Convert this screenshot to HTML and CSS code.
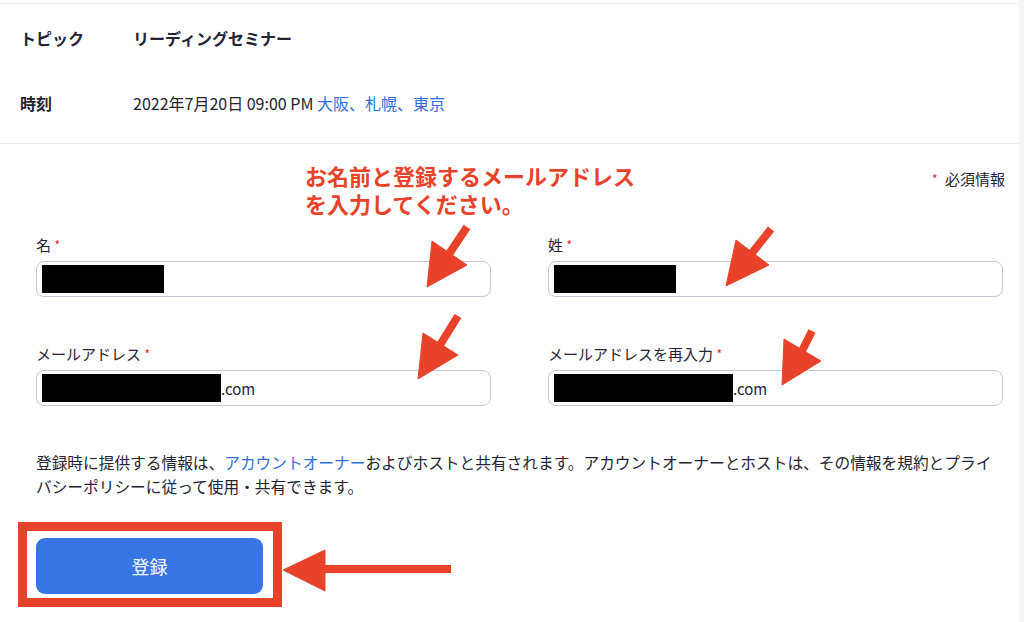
FILE: index.html
```html
<!DOCTYPE html>
<html lang="ja">
<head>
    <meta charset="UTF-8">
    <meta name="viewport" content="width=device-width, initial-scale=1.0">
    <title>ウェビナー登録</title>
    <link rel="stylesheet" href="styles.css">
</head>
<body>
    <div class="page">
        <div class="info">
            <div class="info-row">
                <span class="info-label">トピック</span>
                <span class="info-value bold">リーディングセミナー</span>
            </div>
            <div class="info-row">
                <span class="info-label">時刻</span>
                <span class="info-value">2022年7月20日 09:00 PM <span class="link">大阪、札幌、東京</span></span>
            </div>
        </div>

        <div class="form">
            <div class="required-note"><span class="star">*</span> 必須情報</div>

            <div class="fields">
                <div class="field">
                    <label>名 <span class="star">*</span></label>
                    <div class="input"><span class="redact short"></span></div>
                </div>
                <div class="field">
                    <label>姓 <span class="star">*</span></label>
                    <div class="input"><span class="redact short"></span></div>
                </div>
                <div class="field">
                    <label>メールアドレス <span class="star">*</span></label>
                    <div class="input"><span class="redact long"></span>.com</div>
                </div>
                <div class="field">
                    <label>メールアドレスを再入力 <span class="star">*</span></label>
                    <div class="input"><span class="redact long"></span>.com</div>
                </div>
            </div>

            <p class="notice">登録時に提供する情報は、<span class="link">アカウントオーナー</span>およびホストと共有されます。アカウントオーナーとホストは、その情報を規約とプライバシーポリシーに従って使用・共有できます。</p>

            <button class="submit">登録</button>
        </div>

        <!-- annotation layer -->
        <div class="note-text">お名前と登録するメールアドレス<br>を入力してください。</div>
        <svg class="marks" width="1024" height="622" viewBox="0 0 1024 622">
            <g fill="#e8432a" stroke="#e8432a">
                <line x1="467" y1="227" x2="449" y2="254" stroke-width="8"/>
                <polygon points="427,287 432,241 467,265" stroke-width="1"/>
                <line x1="771" y1="229" x2="752" y2="253" stroke-width="8"/>
                <polygon points="726,286 736,240 769,265" stroke-width="1"/>
                <line x1="458" y1="316" x2="440" y2="345" stroke-width="8"/>
                <polygon points="418,379 423,333 458,355" stroke-width="1"/>
                <line x1="812" y1="331" x2="802" y2="351" stroke-width="8"/>
                <polygon points="782,385 784,339 821,361" stroke-width="1"/>
                <line x1="320" y1="569" x2="451" y2="569" stroke-width="8"/>
                <polygon points="283,570 325,550 325,591" stroke-width="1"/>
                <rect x="22.5" y="526.5" width="255" height="76" fill="none" stroke-width="9"/>
            </g>
        </svg>
    </div>
</body>
</html>
```

FILE: styles.css
```css
body {
    margin: 0;
    background-color: #f4f5f7;
    font-family: "Noto Sans CJK JP", "Liberation Sans", sans-serif;
    color: #232333;
}
.page {
    position: relative;
    width: 1019px;
    height: 622px;
    background-color: #fff;
    box-sizing: border-box;
    border-top: 3px solid #fff;
}
.info {
    border-top: 1px solid #ececf0;
    border-bottom: 1px solid #ececf0;
    padding-bottom: 9px;
}
.info-row {
    display: flex;
    padding: 23px 20px 20px;
    font-size: 16px;
    line-height: 22px;
}
.info-label {
    width: 113px;
    font-weight: bold;
}
.bold {
    font-weight: bold;
}
.link {
    color: #2d6fdd;
}
.form {
    padding: 0 16px 0 36px;
}
.required-note {
    text-align: right;
    font-size: 15px;
    line-height: 22px;
    margin-top: 24px;
    margin-right: -2px;
}
.star {
    color: #e02828;
    font-size: 12px;
    vertical-align: top;
}
.required-note .star {
    margin-right: 4px;
}
.fields {
    display: grid;
    grid-template-columns: 1fr 1fr;
    column-gap: 57px;
    row-gap: 46px;
    margin-top: 44px;
}
.field label {
    display: block;
    font-size: 15px;
    line-height: 22px;
    margin-bottom: 5px;
}
.input {
    height: 36px;
    box-sizing: border-box;
    border: 1px solid #c6c6d6;
    border-radius: 8px;
    display: flex;
    align-items: center;
    padding-left: 5px;
    font-size: 15px;
}
.redact {
    display: inline-block;
    background-color: #000;
    height: 28px;
}
.redact.short {
    width: 122px;
}
.redact.long {
    width: 179px;
}
.notice {
    margin: 45px 0 0;
    font-size: 15.7px;
    line-height: 24px;
    width: 968px;
}
.submit {
    display: block;
    margin-top: 39px;
    width: 227px;
    height: 56px;
    border: none;
    border-radius: 9px;
    background-color: #3875e4;
    color: #fff;
    font-family: inherit;
    font-size: 18px;
}
.note-text {
    position: absolute;
    left: 305px;
    top: 158px;
    color: #e8432a;
    font-size: 22px;
    font-weight: bold;
    line-height: 28px;
}
.marks {
    position: absolute;
    left: 0;
    top: -3px;
    pointer-events: none;
}
```
